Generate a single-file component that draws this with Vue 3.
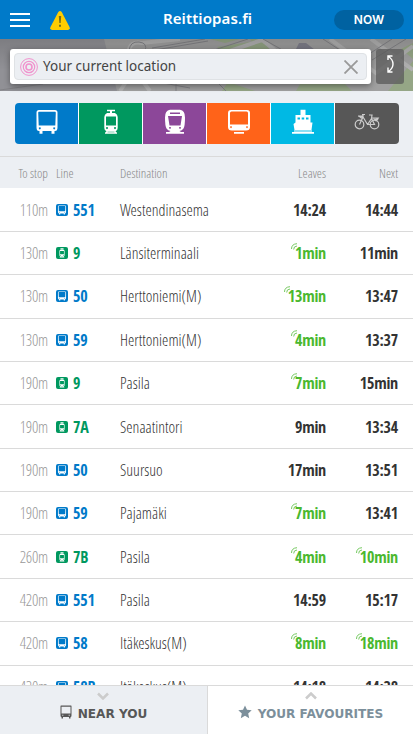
<script setup>
const modes = [
  { id: 'bus', color: '#007ac9' },
  { id: 'tram', color: '#00985f' },
  { id: 'train', color: '#8c4799' },
  { id: 'metro', color: '#ff6319' },
  { id: 'ferry', color: '#00b9e4' },
  { id: 'bike', color: '#575757' },
]
const rows = [
  ['110m', 'bus', '551', 'Westendinasema', '14:24', 0, '14:44', 0],
  ['130m', 'tram', '9', 'Länsiterminaali', '1min', 1, '11min', 0],
  ['130m', 'bus', '50', 'Herttoniemi(M)', '13min', 1, '13:47', 0],
  ['130m', 'bus', '59', 'Herttoniemi(M)', '4min', 1, '13:37', 0],
  ['190m', 'tram', '9', 'Pasila', '7min', 1, '15min', 0],
  ['190m', 'tram', '7A', 'Senaatintori', '9min', 0, '13:34', 0],
  ['190m', 'bus', '50', 'Suursuo', '17min', 0, '13:51', 0],
  ['190m', 'bus', '59', 'Pajamäki', '7min', 1, '13:41', 0],
  ['260m', 'tram', '7B', 'Pasila', '4min', 1, '10min', 1],
  ['420m', 'bus', '551', 'Pasila', '14:59', 0, '15:17', 0],
  ['420m', 'bus', '58', 'Itäkeskus(M)', '8min', 1, '18min', 1],
  ['420m', 'bus', '58B', 'Itäkeskus(M)', '14:18', 0, '14:38', 0],
].map(([dist, mode, line, dest, a, aLive, b, bLive]) => ({
  dist, mode, line, dest,
  times: [{ text: a, live: aLive }, { text: b, live: bLive }],
}))
</script>

<template>
  <div class="app">
    <svg class="defs" width="0" height="0">
      <symbol id="bus" viewBox="0 0 24 26">
        <path fill-rule="evenodd" d="M4 1H20Q22.500 1 22.500 3.500V18.500Q22.500 22 20 22H19.500V24.700H16.500V22H7.500V24.700H4.500V22H4Q1.500 22 1.500 18.500V3.500Q1.500 1 4 1ZM4 2.800Q3.200 2.800 3.200 3.800L3.700 16.500H20.300L20.800 3.800Q20.800 2.800 20 2.800ZM4.800 18.200A1 1 0 1 0 4.810 18.200ZM19.200 18.200A1 1 0 1 0 19.210 18.200Z" />
      </symbol>
      <symbol id="tram" viewBox="0 0 24 26">
        <path fill-rule="evenodd" d="M8 .8H16V2.300H13V4H16Q18.700 5.500 18.700 8V19Q18.700 21.600 16.500 22.300L18 23.700V24.700H6V23.700L7.500 22.300Q5.300 21.600 5.300 19V8Q5.300 5.500 8 4H11V2.300H8ZM7 7.500V16.500H17V7.500ZM8 18A1 1 0 1 0 8.010 18ZM16 18A1 1 0 1 0 16.010 18ZM8.500 22.700V23.300H15.500V22.700Z" />
      </symbol>
      <symbol id="train" viewBox="0 0 24 26">
        <path fill-rule="evenodd" d="M7 .8H17Q22 1.500 22 8.500Q22 17 20.500 19.500Q19 21.500 16.500 22L18 23H21V24.700H3V23H6L7.500 22Q5 21.500 3.500 19.500Q2 17 2 8.500Q2 1.500 7 .8ZM7 3.600V5H17V3.600ZM5 7L6.500 16.500H17.500L19 7ZM7 18A.9.9 0 1 0 7.010 18ZM17 18A.9.9 0 1 0 17.010 18Z" />
      </symbol>
      <symbol id="metro" viewBox="0 0 24 26">
        <path fill-rule="evenodd" d="M4 1H20Q23 1 23 4V18Q23 21.500 19 21.500H5Q1 21.500 1 18V4Q1 1 4 1ZM4.500 2.500Q3 2.500 3 4V15.500H21V4Q21 2.500 19.500 2.500ZM4 17.200A.9.9 0 1 0 4.010 17.200ZM20 17.200A.9.9 0 1 0 20.010 17.200ZM7 23H17V24.700H7Z" />
      </symbol>
      <symbol id="ferry" viewBox="0 0 24 26">
        <path fill-rule="evenodd" d="M9.500 .8H14.500V6H19.500V13.500H21.500L20.500 21H3.500L2.500 15L4.500 13.500V6H9.500ZM6.500 8.500V10.500H9V8.500ZM10.700 8.500V10.500H13.200V8.500ZM15 8.500V10.500H17.500V8.500ZM1 23H23V24.700H1Z" />
        <path d="M3 21H21V23H3Z" opacity=".55" />
      </symbol>
      <symbol id="bike" viewBox="0 0 26 18">
        <g fill="none" stroke="currentColor" stroke-width="1.200">
          <circle cx="5.500" cy="11.500" r="4.300" /><circle cx="20.500" cy="11.500" r="4.300" />
          <path d="M5.500 11.500L9 4L13.500 11.500H20.500L17.500 5.500M13.500 11.500L17.500 5.500M8 1.500H11M9 4V1.500M4 3H8V5.500M15 2H18L17.500 5.500M18 5H24L21 8" />
        </g>
        <path d="M4 3H8L7.500 6ZM19 5.500H25L22.500 8.500Z" fill="currentColor" />
      </symbol>
    </svg>

    <header class="topbar">
      <div class="menu"><i></i><i></i><i></i></div>
      <svg class="warn" viewBox="0 0 20 19"><path d="M8.300 1Q10 -.8 11.700 1L19.500 16Q20.500 18.500 18 19H2Q-.5 18.500.5 16Z" fill="#ffcd00" /><path d="M8.800 5H11.200L10.700 12H9.300ZM9 13.700H11V15.800H9Z" fill="#77701d" /></svg>
      <h1>Reittiopas.fi</h1>
      <button class="now">NOW</button>
    </header>

    <section class="search">
      <svg class="map" viewBox="0 0 413 52" preserveAspectRatio="none">
        <defs><linearGradient id="shade" x2="0" y2="1"><stop stop-color="#000" stop-opacity=".14" /><stop offset=".6" stop-opacity="0" /></linearGradient></defs>
        <path fill="#919196" d="M0 0H413V52H0Z" />
        <path fill="#a0a0a0" d="M104 0H413V52H117Z" />
        <path fill="#95a686" d="M217 8L263 1L278 22H235ZM210 0H240L225 4ZM388 52L413 22V52ZM228 43L255 52H222ZM300 45H345L352 52H296ZM250 0H258L267 10H256ZM401 10L413 4V20Z" />
        <g fill="none" stroke="#b1b1b1" stroke-width="4"><path d="M128 14Q130 1 142 4L180 0M215 17L262 1L291 24M330 0L376 34L413 7M371 0L413 31M120 52L126 43M144 44L150 52" /></g>
        <g fill="none" stroke="#828286"><path d="M129 12Q130 2 139 3T145 12M152 9L205 0M155 11L208 2M208 13L248 0M263 0L286 13M323 0L369 30M372 21L406 0M366 17L392 0M0 51L43 45M226 52L216 42M158 43L190 49M176 43V52" /></g>
        <path d="M295 12L299 4L306 4L319 14Z" fill="#80808c" />
        <path fill="url(#shade)" d="M0 0H413V52H0Z" />
      </svg>
      <div class="box">
        <div class="field">
          <svg class="target" viewBox="0 0 18 18" fill="none" stroke="#f092cd"><circle cx="9" cy="9" r="8.400" /><circle cx="9" cy="9" r="5.700" stroke-width="1.200" /><circle cx="9" cy="9" r="3" stroke-width="1.600" /></svg>
          <span>Your current location</span>
          <svg class="clear" viewBox="0 0 14 14" stroke="#999" stroke-width="1.800"><path d="M.5 .5L13.500 13.500M13.500 .5L.5 13.500" /></svg>
        </div>
      </div>
      <button class="swap"><svg viewBox="0 0 8 18" fill="none" stroke="#fff" stroke-width="1.400"><path d="M1.500 1.500Q6 4.500 6 9T1.500 16.500M5.500 1H1V5M1 12.500V17H5.500" /></svg></button>
    </section>

    <nav class="modes">
      <button v-for="m in modes" :key="m.id" :class="['mode', m.id]" :style="{ background: m.color }">
        <svg><use :href="'#' + m.id" /></svg>
      </button>
    </nav>

    <div class="grid head"><span class="r">To stop</span><span>Line</span><span>Destination</span><span class="r">Leaves</span><span class="r">Next</span></div>

    <main class="list">
      <div v-for="(r, i) in rows" :key="i" class="grid row">
        <span class="r dist">{{ r.dist }}</span>
        <span :class="['line', r.mode]"><i class="badge"><svg><use :href="'#' + r.mode" /></svg></i>{{ r.line }}</span>
        <span class="dest">{{ r.dest }}</span>
        <span v-for="(t, k) in r.times" :key="k" :class="['r', 'time', { live: t.live }]"><svg v-if="t.live" class="sig" viewBox="0 0 7 7" fill="none" stroke="currentColor"><path d="M.5 6Q.5 1 6 .7M2.700 6.500Q2.500 3.200 6 3" /></svg>{{ t.text }}</span>
      </div>
    </main>

    <footer class="tabs">
      <div class="tab near">
        <svg class="chev" viewBox="0 0 12 8"><path d="M1 1.500L6 6.500L11 1.500" /></svg>
        <div class="label"><svg class="tbus" viewBox="0 0 12 14"><path fill-rule="evenodd" d="M1 .5H11Q11.500.5 11.500 1V10.500Q11.500 12 10.500 12V13.500H9V12H3V13.500H1.500V12Q.5 12 .5 10.500V1Q.5.5 1 .5ZM1.500 1.700V8.500H10.500V1.700ZM2.300 9.800V10.800H3.300V9.800ZM8.700 9.800V10.800H9.700V9.800Z" /></svg><span>NEAR YOU</span></div>
      </div>
      <div class="tab fav">
        <svg class="chev" viewBox="0 0 12 8"><path d="M1 6.500L6 1.500L11 6.500" /></svg>
        <div class="label"><svg class="star" viewBox="0 0 14 14"><path d="M7 .5L9 4.800L13.700 5.300L10.200 8.500L11.200 13.200L7 10.800L2.800 13.200L3.800 8.500L.3 5.300L5 4.800Z" /></svg><span>YOUR FAVOURITES</span></div>
      </div>
    </footer>
  </div>
</template>

<style>
body { margin: 0; overflow: hidden; }
</style>
<style scoped>
* { box-sizing: border-box; }
button { border: 0; padding: 0; margin: 0; font: inherit; color: inherit; }
.app { height: 734px; width: 413px; display: flex; flex-direction: column; overflow: hidden; background: #eceff3; font-family: "Open Sans Condensed", "Open Sans", sans-serif; font-stretch: 75%; color: #333; }
.defs { position: absolute; }
.topbar { height: 39px; flex: none; display: grid; grid-template-columns: 40px 94px 1fr 70px; align-items: center; padding: 0 9px 0 10px; background: #007ac9; color: #fff; }
.menu { display: grid; gap: 4px; width: 20px; margin-top: 1px; }
.menu i { height: 2px; background: #fff; }
.warn { width: 20px; height: 19px; margin-top: 1px; }
h1 { margin: 0; padding-left: 19px; font: 600 15px "Noto Sans", sans-serif; letter-spacing: .1px; white-space: nowrap; padding-bottom: 3px; }
.now { width: 70px; height: 20px; border-radius: 10px; background: #0062a1; font: 600 12px Inter, sans-serif; }
.search { position: relative; height: 52px; flex: none; display: flex; gap: 5px; padding: 10px 9px 7px 10px; background: #8b8b8d; }
.map { position: absolute; inset: 0; width: 413px; height: 52px; }
.box { position: relative; width: 361px; height: 35px; padding: 4px; border-radius: 3px; background: #fff; box-shadow: 0 2px 6px rgba(0,0,0,.4); }
.field { height: 27px; display: flex; align-items: center; padding: 0 8px 0 5px; border: 1px solid #dfe2e5; border-radius: 4px; background: #eceff3; font: 13.5px "Noto Sans", sans-serif; color: #444; }
.field span { flex: 1; padding-left: 5px; padding-bottom: 1px; }
.target { width: 18px; height: 18px; }
.clear { width: 14px; height: 14px; }
.swap { position: relative; width: 28px; height: 35px; display: grid; place-items: center; border-radius: 3px; background: rgba(90,90,90,.75); }
.swap svg { width: 8px; height: 18px; margin: -5px 0 0 2px; }
.modes { height: 66px; flex: none; display: grid; grid-template-columns: repeat(5, 63px) 1fr; gap: 1px; padding: 12px 14px 12px 15px; border-bottom: 1px solid #dadada; background: linear-gradient(#fff, #fff) 18px 12px / 376px 41px no-repeat; }
.mode { height: 41px; display: grid; place-items: center; color: #ccc; fill: #fff; }
.mode:first-child { border-radius: 4px 0 0 4px; }
.mode:last-child { border-radius: 0 4px 4px 0; }
.mode svg { width: 24px; height: 26px; margin-top: -3px; }
.mode.bike svg { width: 26px; height: 18px; margin-top: -3px; }
.grid { display: grid; grid-template-columns: 48px 72px 120px 86px 72px; padding-right: 15px; align-items: center; }
.r { text-align: right; }
.head { height: 31px; flex: none; padding-top: 1px; font-family: "Open Sans Condensed Light", "Open Sans Light", "Open Sans", sans-serif; font-size: 13px; font-weight: 300; line-height: 18px; color: #888; }
.head span:nth-child(2), .line { padding-left: 8px; }
.list { flex: 1; min-height: 0; overflow: hidden; padding-top: .4px; background: #fff; }
.row { height: 43.375px; padding-top: .2px; border-bottom: 1px solid #dadada; font-size: 16px; line-height: 22px; }
.dist, .dest { font-family: "Open Sans Condensed Light", "Open Sans Light", "Open Sans", sans-serif; font-weight: 300; }
.dist { color: #999; letter-spacing: -.25px; }
.line { display: flex; align-items: center; gap: 5px; font-weight: 700; letter-spacing: -.2px; color: #007ac9; }
.line.tram { color: #00985f; }
.badge { width: 12px; height: 12px; display: grid; place-items: center; border-radius: 2px; background: currentColor; }
.badge svg { width: 10px; height: 10px; fill: #fff; }
.time { font-weight: 700; letter-spacing: -.2px; }
.live { color: #4ab82f; }
.sig { width: 7px; height: 7px; margin-right: -3px; vertical-align: 9px; opacity: .75; }
.tabs { height: 49px; flex: none; display: grid; grid-template-columns: 208px 1fr; border-top: 1px solid #dadada; font: 700 12.1px "DejaVu Sans", sans-serif; }
.tab { display: flex; flex-direction: column; align-items: center; padding-top: 6px; fill: currentColor; }
.near { background: #eceff3; color: #575757; border-right: 1px solid #dadada; }
.fav { background: #fff; color: #7c8f9b; }
.chev { width: 12px; height: 8px; fill: none; stroke: #ccc; stroke-width: 2.500; }
.near .chev { margin-left: -2px; }
.label { display: flex; align-items: center; gap: 6px; height: 20px; margin-top: 4px; }
.tbus { width: 12px; height: 14px; margin-top: -5px; }
.star { width: 14px; height: 14px; margin-top: -5px; }
</style>
